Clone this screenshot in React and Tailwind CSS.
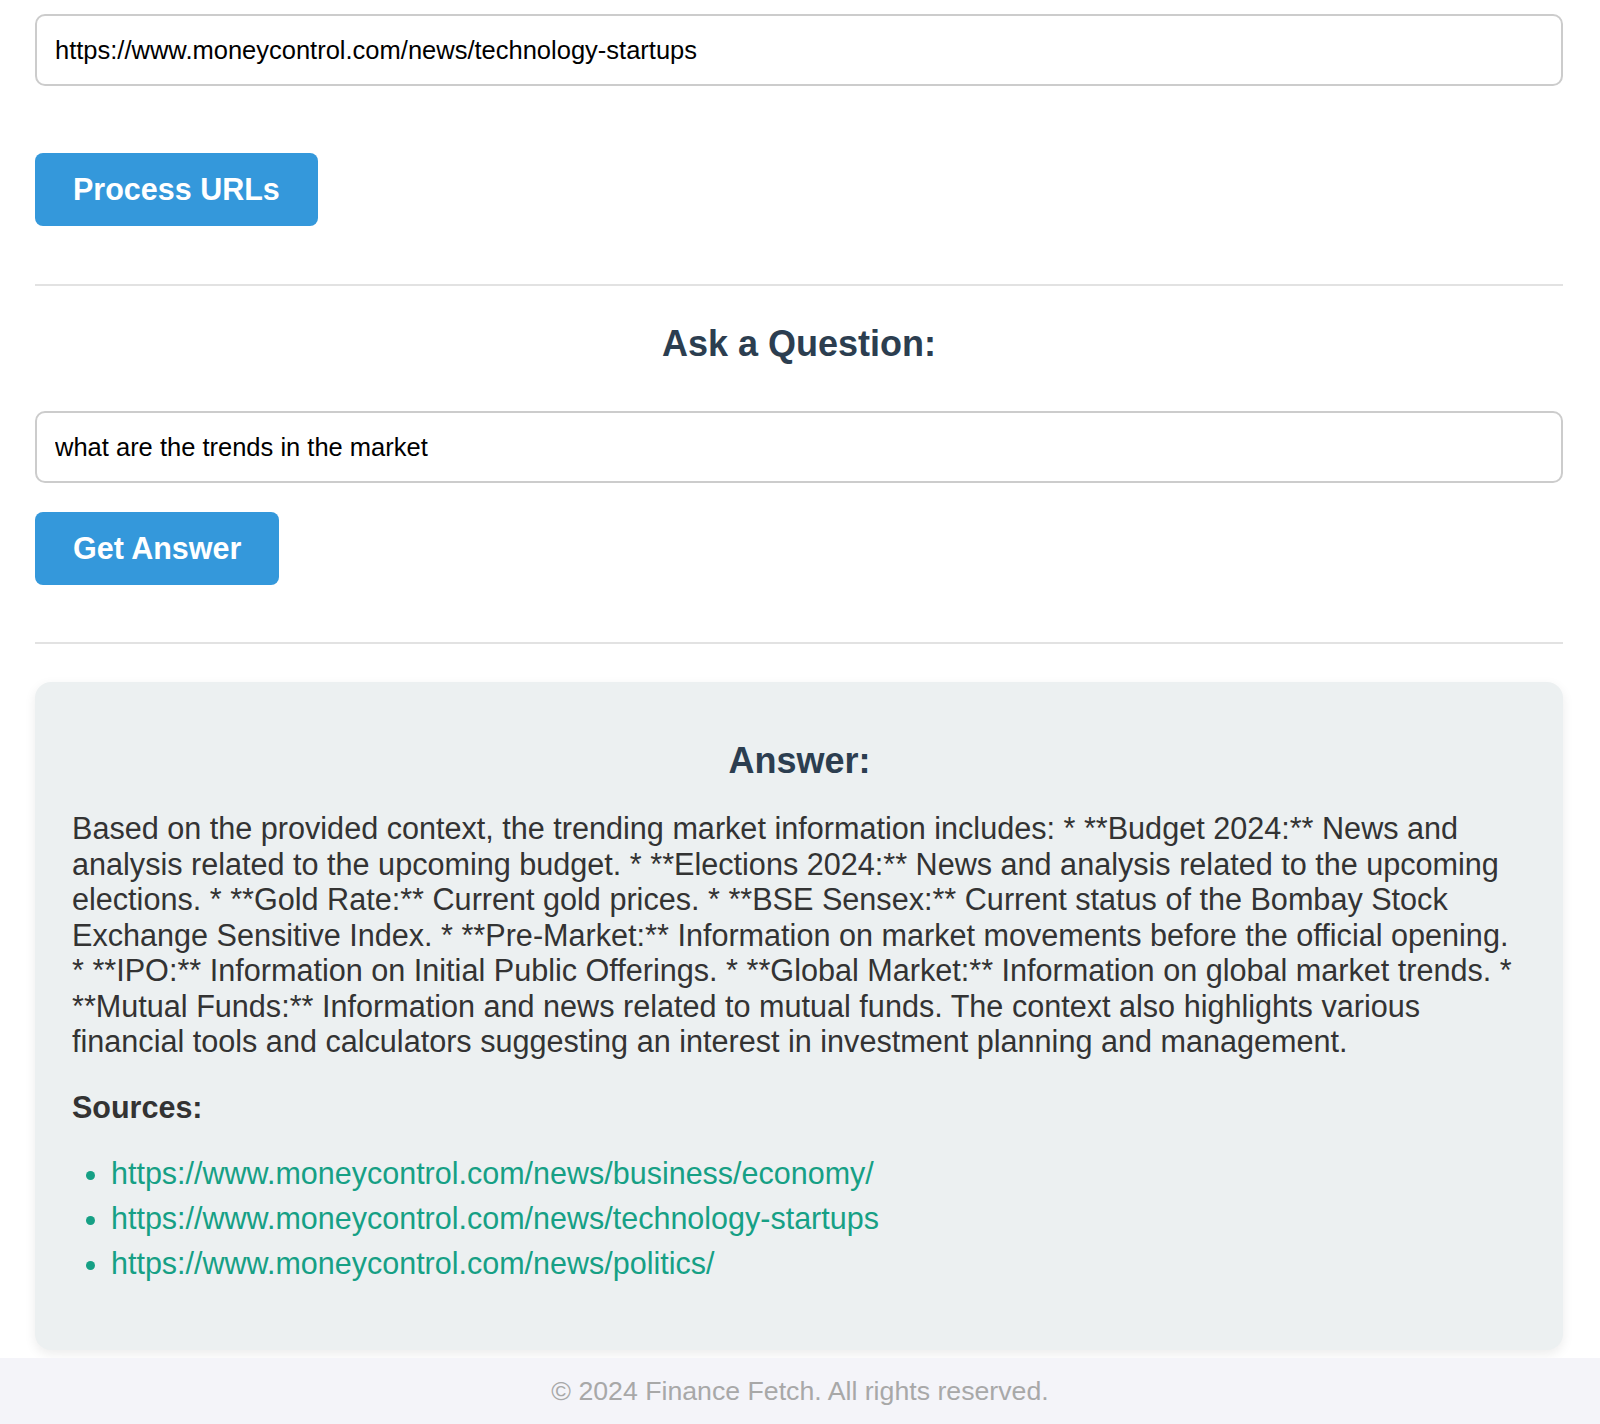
export default function App() {
  const sources = [
    "https://www.moneycontrol.com/news/business/economy/",
    "https://www.moneycontrol.com/news/technology-startups",
    "https://www.moneycontrol.com/news/politics/",
  ];
  return (
    <div className="min-h-screen bg-white font-['Liberation_Sans',Arial,sans-serif]">
      <div className="ml-[35px] w-[1528px] pt-[14px]">
        <input
          readOnly
          defaultValue="https://www.moneycontrol.com/news/technology-startups"
          className="block w-full h-[72px] border-2 border-[#cccccc] rounded-[10px] px-[18px] text-[25.5px] text-black bg-white outline-none"
        />
        <button className="block mt-[67px] h-[73px] px-[38px] bg-[#3498db] text-white font-bold text-[30.5px] rounded-[8px] leading-none">
          Process URLs
        </button>
        <div className="mt-[58px] h-[2px] bg-[#e2e2e2]" />
        <h2 className="mt-[38px] text-center text-[36px] leading-[40px] font-bold text-[#2c3e50]">
          Ask a Question:
        </h2>
        <input
          readOnly
          defaultValue="what are the trends in the market"
          className="block mt-[47px] w-full h-[72px] border-2 border-[#cccccc] rounded-[10px] px-[18px] text-[25.5px] text-black bg-white outline-none"
        />
        <button className="block mt-[29px] h-[73px] px-[38px] bg-[#3498db] text-white font-bold text-[30.5px] rounded-[8px] leading-none">
          Get Answer
        </button>
        <div className="mt-[57px] h-[2px] bg-[#e2e2e2]" />
        <div className="mt-[38px] h-[668px] rounded-[16px] bg-[#ecf0f1] shadow-[0_4px_12px_rgba(0,0,0,0.08)] pl-[37px] pr-[36px] pt-[59px]">
          <h3 className="text-center text-[36px] leading-[40px] font-bold text-[#2c3e50]">
            Answer:
          </h3>
          <p className="mt-[30px] text-[30.6px] leading-[35.5px] text-[#333333]">
            Based on the provided context, the trending market information includes: * **Budget 2024:** News and analysis related to the upcoming budget. * **Elections 2024:** News and analysis related to the upcoming elections. * **Gold Rate:** Current gold prices. * **BSE Sensex:** Current status of the Bombay Stock Exchange Sensitive Index. * **Pre-Market:** Information on market movements before the official opening. * **IPO:** Information on Initial Public Offerings. * **Global Market:** Information on global market trends. * **Mutual Funds:** Information and news related to mutual funds. The context also highlights various financial tools and calculators suggesting an interest in investment planning and management.
          </p>
          <h4 className="mt-[29px] text-[30.5px] leading-[36px] font-bold text-[#333333]">
            Sources:
          </h4>
          <ul className="mt-[26px] list-disc pl-[39px]">
            {sources.map((s) => (
              <li key={s} className="text-[30.5px] leading-[45px] text-[#16a085]">
                <a href="#" className="text-[#16a085]">{s}</a>
              </li>
            ))}
          </ul>
        </div>
      </div>
      <footer className="mt-[8px] h-[66px] bg-[#f4f4f9] flex items-center justify-center">
        <span className="text-[26.7px] text-[#a8a8a8]">© 2024 Finance Fetch. All rights reserved.</span>
      </footer>
    </div>
  );
}
